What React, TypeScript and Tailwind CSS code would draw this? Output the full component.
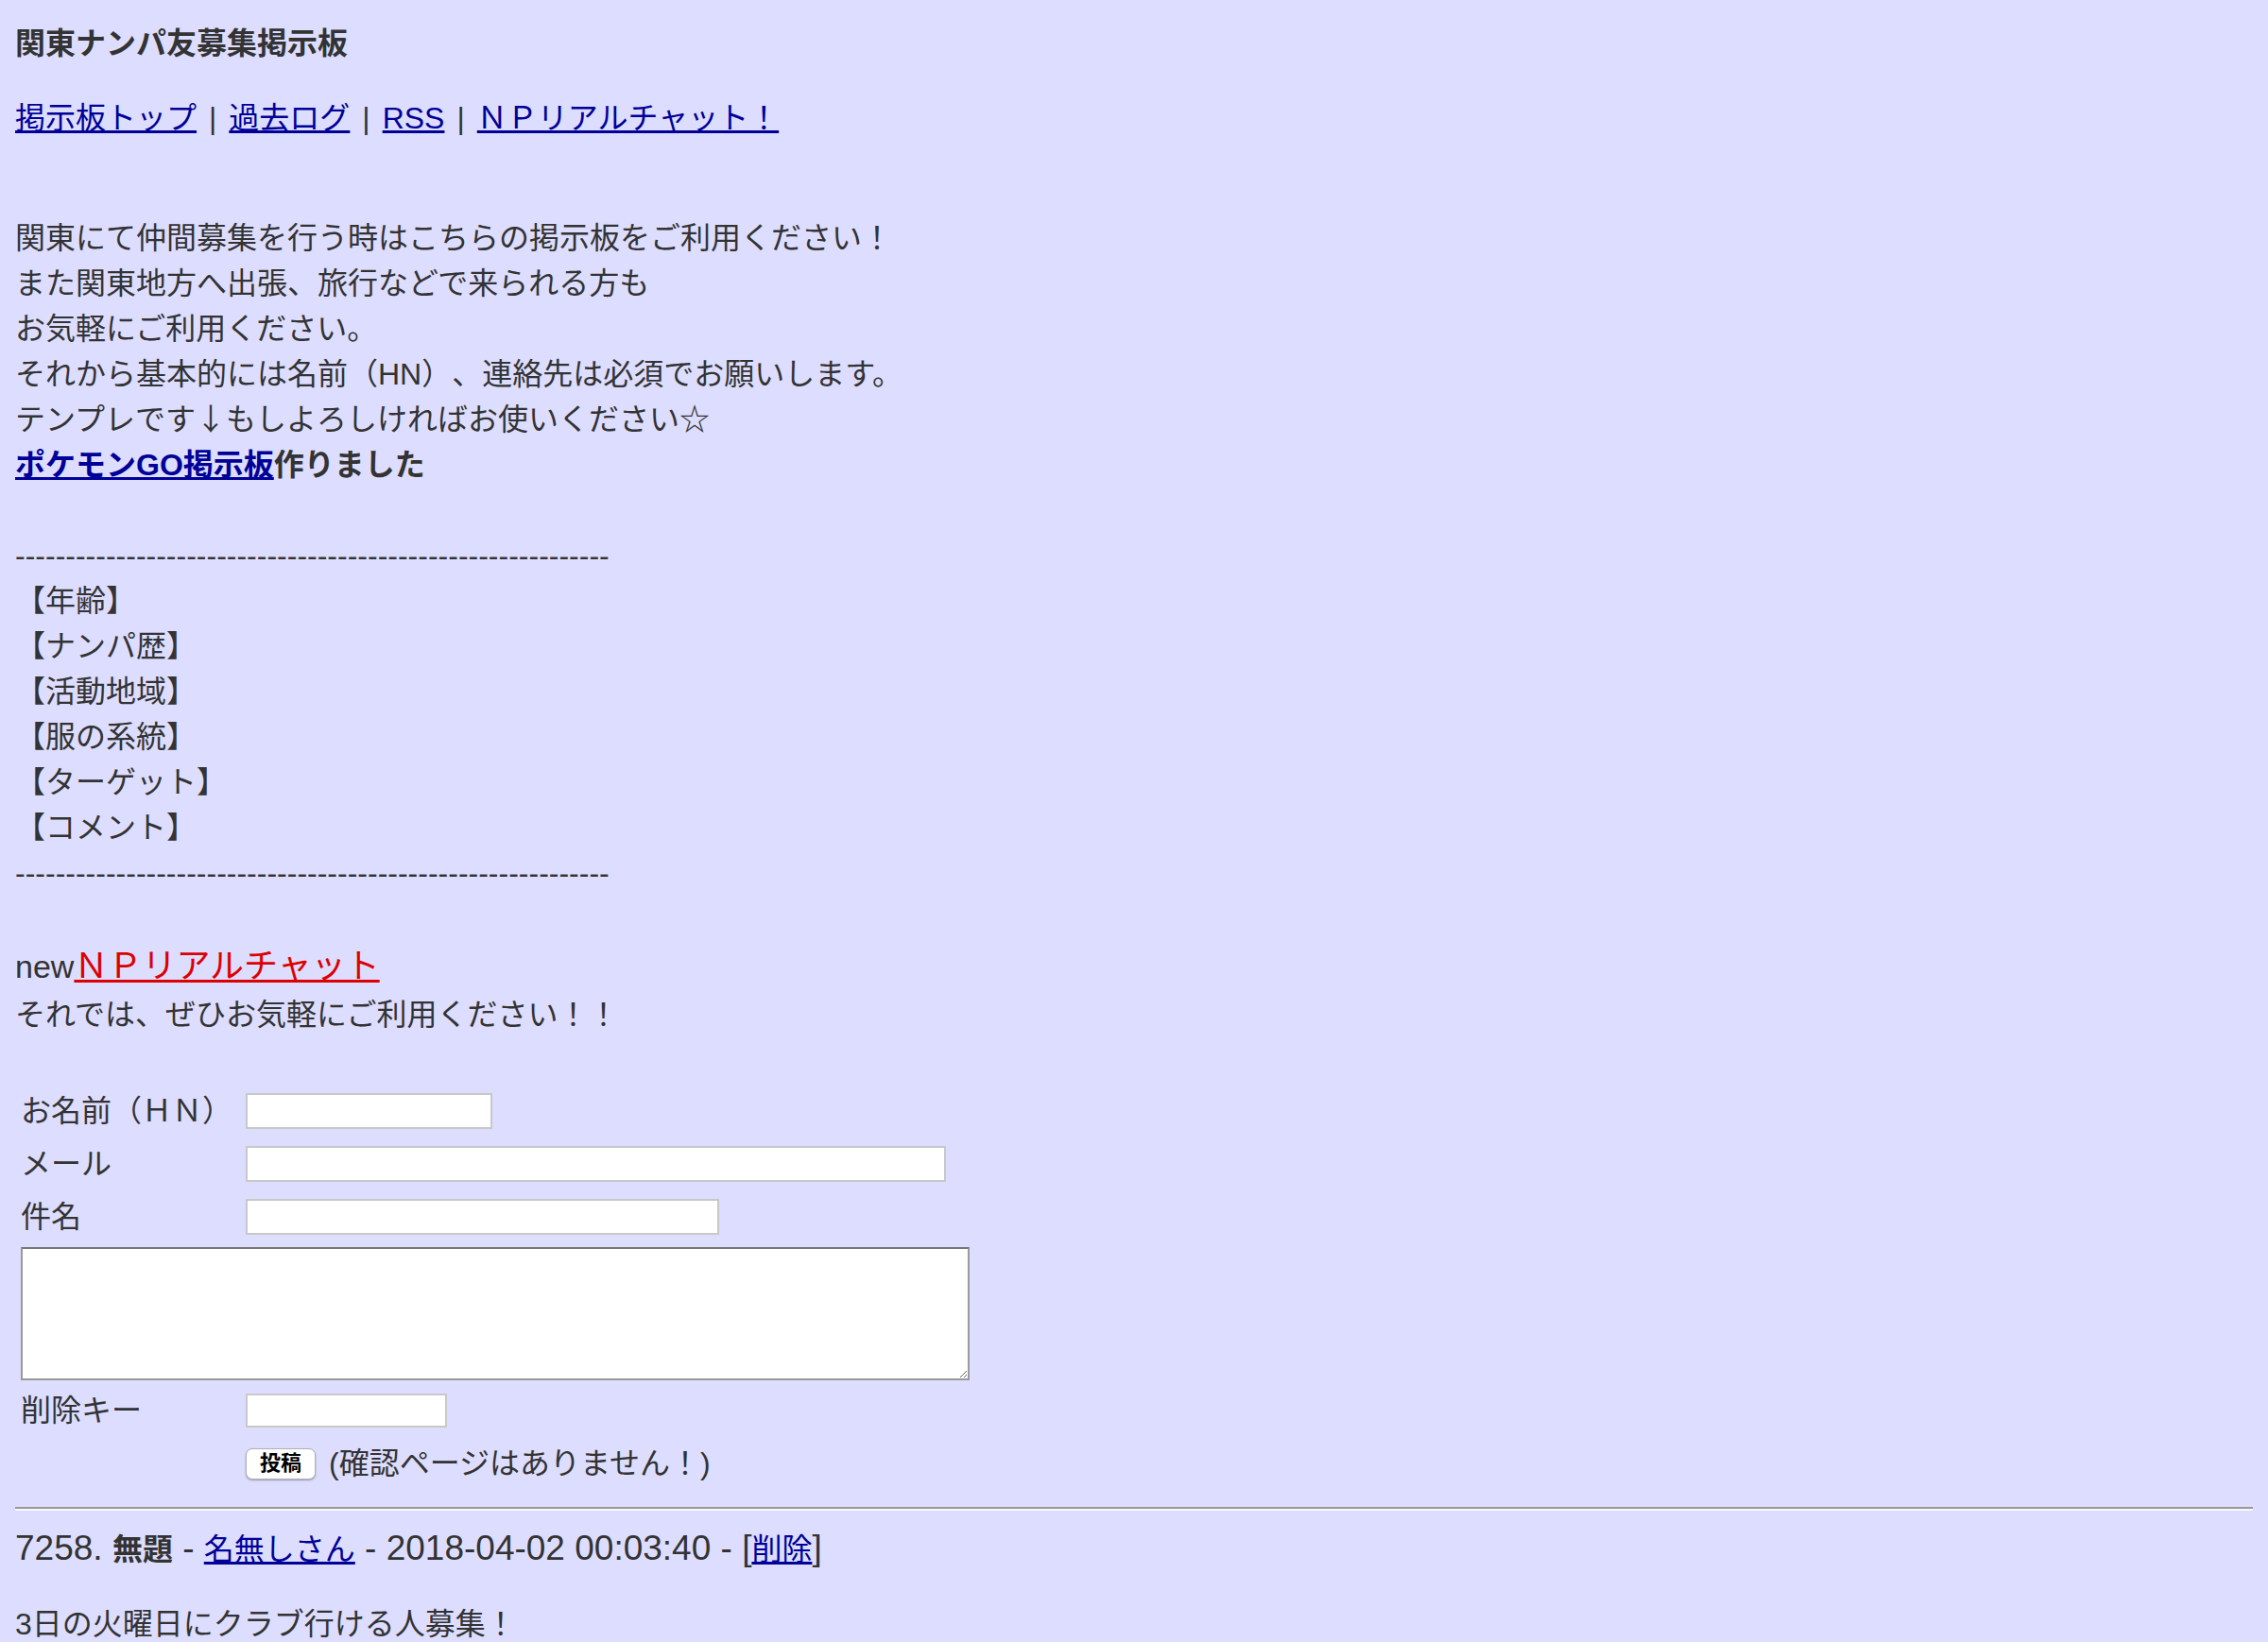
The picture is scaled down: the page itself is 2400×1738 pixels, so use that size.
const dashes = "-".repeat(59);

const Sep = () => <span className="mx-[13px]">|</span>;

const Row = ({ label, children }: { label: string; children: React.ReactNode }) => (
  <>
    <div className="flex h-[48px] items-center">{label}</div>
    <div className="flex h-[48px] items-center">{children}</div>
  </>
);

const inputCls = "h-[38px] border-2 border-[#c8c8c8] bg-white outline-none";

export default function App() {
  return (
    <div className="min-h-screen bg-[#ddddff] px-[16px] pt-[22px] pb-[40px] font-['Liberation_Sans','Noto_Sans_CJK_JP',sans-serif] text-[32px] leading-[1.5] text-[#333] [text-spacing-trim:space-all]">
      <div className="font-bold">関東ナンパ友募集掲示板</div>

      <div className="mt-[31px]">
        <a href="#" className="text-[#000099] underline">掲示板トップ</a>
        <Sep />
        <a href="#" className="text-[#000099] underline">過去ログ</a>
        <Sep />
        <a href="#" className="text-[#000099] underline">RSS</a>
        <Sep />
        <a href="#" className="text-[#000099] underline">ＮＰリアルチャット！</a>
      </div>

      <div className="mt-[79px]">
        関東にて仲間募集を行う時はこちらの掲示板をご利用ください！<br />
        また関東地方へ出張、旅行などで来られる方も<br />
        お気軽にご利用ください。<br />
        それから基本的には名前（HN）、連絡先は必須でお願いします。<br />
        テンプレです<span className="font-['Noto_Sans_CJK_JP',sans-serif] leading-none">↓</span>もしよろしければお使いください☆<br />
        <b>
          <a href="#" className="text-[#000099] underline">ポケモンGO掲示板</a>作りました
        </b>
        <br />
        <br />
        {dashes}
        <br />
        【年齢】<br />
        【ナンパ歴】<br />
        【活動地域】<br />
        【服の系統】<br />
        【ターゲット】<br />
        【コメント】<br />
        {dashes}
        <br />
        <br />
        <span className="text-[34px]">new</span>
        <a href="#" className="text-[36px] text-[#dd0000] underline">ＮＰリアルチャット</a>
        <br />
        それでは、ぜひお気軽にご利用ください！！
      </div>

      <div className="ml-[6px] mt-[54px] grid grid-cols-[230px_auto] gap-x-[8px] gap-y-[8px]">
        <Row label="お名前（ＨＮ）">
          <input className={`${inputCls} w-[261px]`} />
        </Row>
        <Row label="メール">
          <input className={`${inputCls} w-[741px]`} />
        </Row>
        <Row label="件名">
          <input className={`${inputCls} w-[501px]`} />
        </Row>
        <div className="col-span-2">
          <textarea className="block h-[141px] w-[1004px] border-2 border-[#999] border-t-[#777] bg-white outline-none" />
        </div>
        <Row label="削除キー">
          <input className="h-[36px] w-[213px] border-2 border-[#c8c8c8] bg-white outline-none" />
        </Row>
        <div />
        <div className="flex h-[48px] items-center">
          <button className="flex h-[33px] w-[74px] items-center justify-center rounded-[7px] border border-[#b0b0b0] bg-white text-[22px] font-bold leading-none text-black shadow-[0_1px_2px_rgba(0,0,0,0.3)]">
            投稿
          </button>
          <span className="ml-[14px]">(確認ページはありません！)</span>
        </div>
      </div>

      <hr className="mt-[22px] h-0 border-t-2 border-b-2 border-t-[#999] border-b-[#f6f6ff]" />

      <div className="mt-[13px] h-[54px] text-[37px] leading-[54px]">
        7258. <b className="text-[32px] leading-none">無題</b> -{" "}
        <a href="#" className="text-[32px] leading-none text-[#000099] underline">名無しさん</a> - 2018-04-02 00:03:40 - [
        <a href="#" className="text-[32px] leading-none text-[#000099] underline">削除</a>]
      </div>

      <div className="mt-[29px]">3日の火曜日にクラブ行ける人募集！</div>
    </div>
  );
}
